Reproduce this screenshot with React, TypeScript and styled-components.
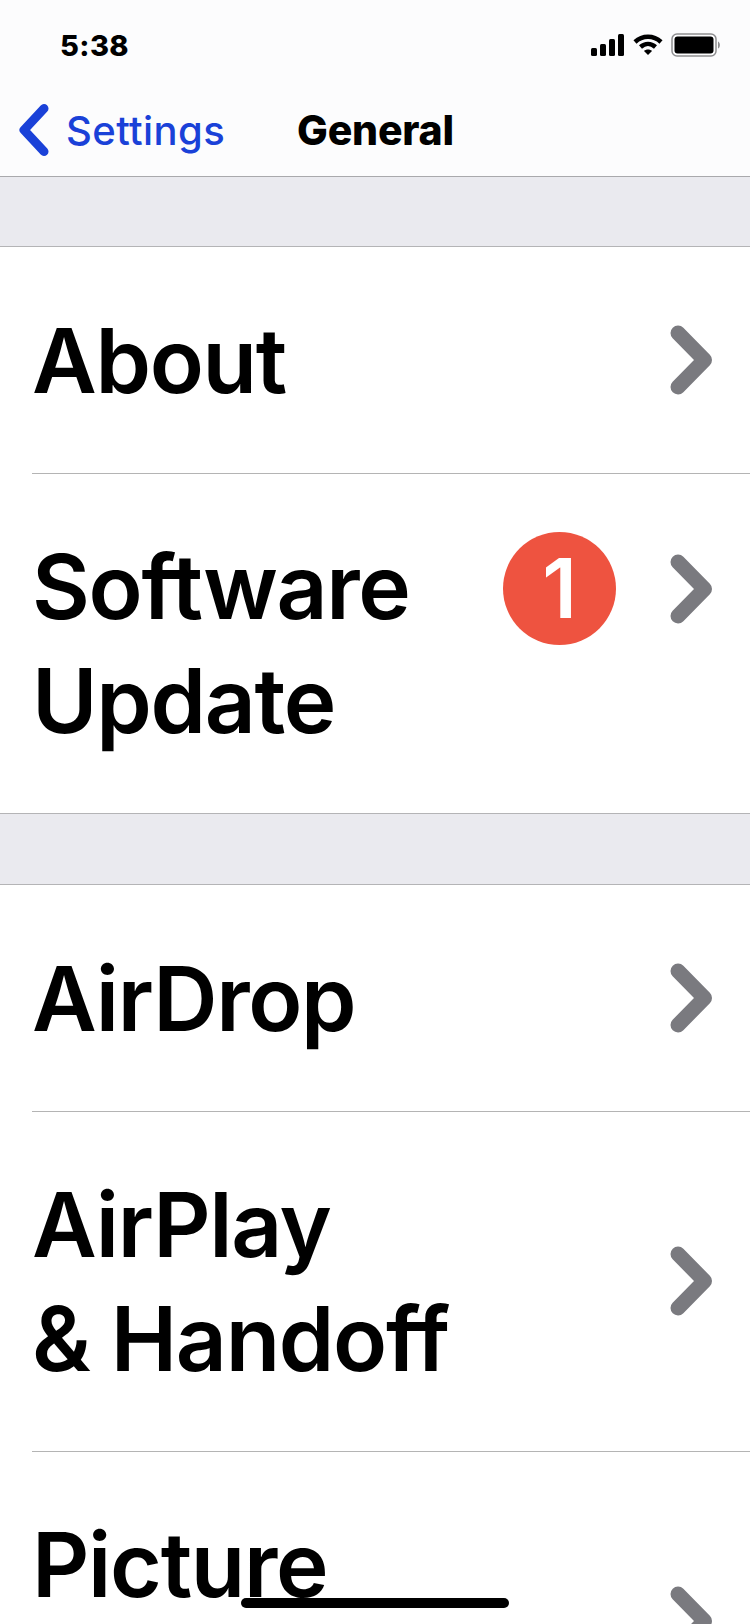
import React from "react";
import styled, { createGlobalStyle } from "styled-components";

const Global = createGlobalStyle`
  html, body { margin: 0; padding: 0; background: #fff; }
  body { font-family: Inter, "Liberation Sans", sans-serif; }
`;

const Screen = styled.div`
  position: relative;
  width: 750px;
  height: 1624px;
  overflow: hidden;
  background: #eaeaef;
  color: #000;
`;

const Header = styled.header`
  height: 177px;
  box-sizing: border-box;
  background: #fcfcfd;
  border-bottom: 1px solid #a9a9ac;
  display: flex;
  flex-direction: column;
`;

const StatusBar = styled.div`
  height: 90px;
  display: flex;
  align-items: center;
  justify-content: space-between;
  padding: 0 29px 0 60px;
`;

const Clock = styled.span`
  font-size: 29px;
  font-weight: 800;
  letter-spacing: 0.4px;
`;

const StatusIcons = styled.div`
  display: flex;
  align-items: center;
  gap: 8px;
`;

const NavBar = styled.nav`
  flex: 1;
  display: flex;
  align-items: center;
  padding: 0 0 6px 18px;
`;

const BackLink = styled.span`
  display: flex;
  align-items: center;
  gap: 16px;
  width: 279px;
  color: #1a41d8;
  font-size: 40px;
  font-weight: 500;
  letter-spacing: 0.4px;
`;

const NavTitle = styled.span`
  font-size: 41px;
  font-weight: 800;
  letter-spacing: -0.2px;
`;

const Spacer = styled.div<{ $h: number }>`
  height: ${(p) => p.$h}px;
`;

const Group = styled.section`
  background: #fff;
  border-top: 1px solid #b4b4b6;
  border-bottom: 1px solid #b4b4b6;
`;

const Row = styled.div<{ $divider?: boolean }>`
  margin-left: 32px;
  padding: 56px 36px 56px 0;
  display: flex;
  align-items: center;
  box-shadow: ${(p) => (p.$divider ? "inset 0 1px 0 #b4b4b4" : "none")};
`;

const Title = styled.span`
  flex: 1;
  padding-top: 1px;
  margin-bottom: -1px;
  font-size: 89px;
  font-weight: 600;
  line-height: 114px;
  letter-spacing: -1.3px;
  white-space: pre-line;
`;

const Accessory = styled.div<{ $top?: boolean }>`
  display: flex;
  align-items: center;
  height: 114px;
  align-self: ${(p) => (p.$top ? "flex-start" : "center")};
  margin-top: ${(p) => (p.$top ? "3px" : "0")};
`;

const Badge = styled.span`
  width: 113px;
  height: 113px;
  margin: -1px 54px 0 0;
  border-radius: 50%;
  background: #ee5340;
  color: #fff;
  font-size: 82px;
  font-weight: 600;
  line-height: 113px;
  text-align: center;
`;

const HomeBar = styled.div`
  position: absolute;
  left: 241px;
  bottom: 16px;
  width: 268px;
  height: 10px;
  border-radius: 5px;
  background: #000;
`;

const Chevron = () => (
  <svg width="44" height="70" viewBox="0 0 44 70" fill="none">
    <path d="M8 8 L34.500 35 L8 62" stroke="#7a7a7f" strokeWidth="15" strokeLinecap="round" strokeLinejoin="round" />
  </svg>
);

const BackChevron = () => (
  <svg width="32" height="52" viewBox="0 0 32 52" fill="none">
    <path d="M26 4.500 L6 26 L26 47.500" stroke="#1a41d8" strokeWidth="9" strokeLinecap="round" strokeLinejoin="round" />
  </svg>
);

const Signal = () => (
  <svg width="34" height="22" viewBox="0 0 34 22" fill="#000">
    <rect x="0" y="14" width="6" height="8" rx="1.500" />
    <rect x="9" y="10" width="6" height="12" rx="1.500" />
    <rect x="18" y="5" width="6" height="17" rx="1.500" />
    <rect x="27" y="0" width="6" height="22" rx="1.500" />
  </svg>
);

const Wifi = () => (
  <svg width="30" height="22" viewBox="0 0 30 22" fill="none" stroke="#000" strokeWidth="4.500">
    <path d="M2 8 C9.500 1 20.500 1 28 8" />
    <path d="M7.500 13 C12 9 18 9 22.500 13" />
    <path d="M11 17 L15 21 L19 17 C17 15 13 15 11 17 Z" fill="#000" stroke="none" />
  </svg>
);

const Battery = () => (
  <svg width="50" height="24" viewBox="0 0 50 24" fill="none">
    <rect x="1" y="1" width="44" height="22" rx="5" stroke="#8e8e90" strokeWidth="1.500" />
    <rect x="3.500" y="3.500" width="39" height="17" rx="3" fill="#000" />
    <path d="M47 8.500 C49.500 9.500 49.500 14.500 47 15.500 Z" fill="#8e8e90" />
  </svg>
);

type Item = { label: string; badge?: string };

const groupOne: Item[] = [{ label: "About" }, { label: "Software\nUpdate", badge: "1" }];
const groupTwo: Item[] = [
  { label: "AirDrop" },
  { label: "AirPlay\n& Handoff" },
  { label: "Picture\nin Picture" },
];

const Rows = ({ items }: { items: Item[] }) => (
  <Group>
    {items.map((item, i) => (
      <Row key={item.label} $divider={i > 0}>
        <Title>{item.label}</Title>
        <Accessory $top={!!item.badge}>
          {item.badge && <Badge>{item.badge}</Badge>}
          <Chevron />
        </Accessory>
      </Row>
    ))}
  </Group>
);

export default function App() {
  return (
    <Screen>
      <Global />
      <Header>
        <StatusBar>
          <Clock>5:38</Clock>
          <StatusIcons>
            <Signal />
            <Wifi />
            <Battery />
          </StatusIcons>
        </StatusBar>
        <NavBar>
          <BackLink>
            <BackChevron />
            Settings
          </BackLink>
          <NavTitle>General</NavTitle>
        </NavBar>
      </Header>
      <Spacer $h={69} />
      <Rows items={groupOne} />
      <Spacer $h={70} />
      <Rows items={groupTwo} />
      <HomeBar />
    </Screen>
  );
}
